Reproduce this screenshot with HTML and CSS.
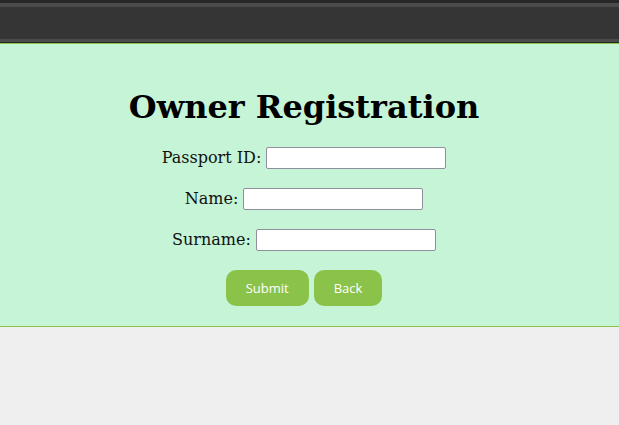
FILE: index.html
```html
<!DOCTYPE html>
<html>
<head>
<meta charset="utf-8">
<link rel="stylesheet" href="styles.css">
</head>
<body>
<div class="topbar"><div class="topbar-inner"></div></div>
<section class="panel">
  <div class="content">
    <h1 class="title">Owner Registration</h1>
    <form class="form">
      <div class="row"><label>Passport ID:</label><input type="text" class="field"></div>
      <div class="row"><label>Name:</label><input type="text" class="field"></div>
      <div class="row"><label>Surname:</label><input type="text" class="field"></div>
      <div class="actions">
        <button type="button" class="btn">Submit</button>
        <button type="button" class="btn">Back</button>
      </div>
    </form>
  </div>
</section>
</body>
</html>
```
FILE: styles.css
```css
html, body {
  margin: 0;
  padding: 0;
  background: #efefef;
  font-family: "DejaVu Serif", serif;
}
.topbar {
  height: 44px;
  box-sizing: border-box;
  background: #272727;
  padding: 3px 0 1px;
  border-bottom: 1px solid #8bc34a;
}
.topbar-inner {
  height: 39px;
  box-sizing: border-box;
  background: #353535;
  border-top: 4px solid #4b4b4b;
  border-bottom: 3px solid #4b4b4b;
}
.panel {
  background: #c6f4d7;
  border-bottom: 1px solid #8bc34a;
  padding: 27px 0 20px;
}
.content {
  padding-right: 11px;
  display: flex;
  flex-direction: column;
  align-items: center;
}
.title {
  font-size: 32px;
  font-weight: bold;
  margin: 18px 0 21px;
  line-height: 37px;
  color: #000;
}
.form {
  display: flex;
  flex-direction: column;
  align-items: center;
  gap: 19px;
}
.row {
  display: flex;
  align-items: center;
  gap: 5px;
  font-size: 16px;
  line-height: 22px;
  color: #111;
}
.field {
  width: 180px;
  height: 22px;
  box-sizing: border-box;
  border: 1px solid #8f8f9d;
  border-radius: 2px;
  background: #fff;
  margin: 0;
}
.actions {
  display: flex;
  gap: 5px;
}
.btn {
  background: #8bc34a;
  color: #fff;
  border: none;
  border-radius: 10px;
  height: 36px;
  padding: 0 20px;
  font-family: "Open Sans", sans-serif;
  font-size: 13px;
  cursor: pointer;
}
```
